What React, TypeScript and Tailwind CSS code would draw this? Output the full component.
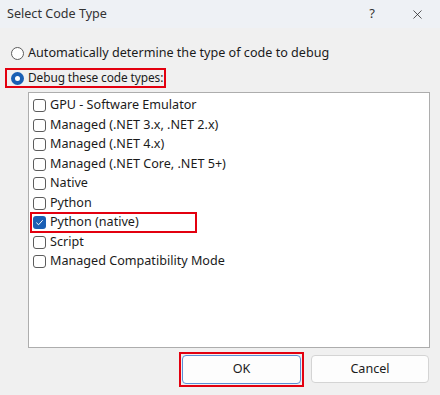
import { X } from 'lucide-react';

const items = [
  { label: 'GPU - Software Emulator', checked: false },
  { label: 'Managed (.NET 3.x, .NET 2.x)', checked: false },
  { label: 'Managed (.NET 4.x)', checked: false },
  { label: 'Managed (.NET Core, .NET 5+)', checked: false },
  { label: 'Native', checked: false },
  { label: 'Python', checked: false },
  { label: 'Python (native)', checked: true, marked: true },
  { label: 'Script', checked: false },
  { label: 'Managed Compatibility Mode', checked: false },
];

function Check({ checked }: { checked: boolean }) {
  if (checked) {
    return (
      <span className="w-[13px] h-[13px] rounded-[3px] bg-[#1a5fb4] flex items-center justify-center flex-shrink-0">
        <svg viewBox="0 0 10 10" className="w-[9px] h-[9px]">
          <path d="M1.5 5.2 L4 7.5 L8.5 2.5" fill="none" stroke="white" strokeWidth="1.1" />
        </svg>
      </span>
    );
  }
  return <span className="w-[13px] h-[13px] rounded-[3px] border border-[#5c5c5c] bg-white flex-shrink-0" />;
}

export default function App() {
  return (
    <div
      className="w-[440px] h-[395px] bg-[#f0f0f0] text-[#1b1b1b] text-[12.6px] flex flex-col overflow-hidden whitespace-nowrap"
      style={{ fontFamily: '"Noto Sans", "Open Sans", sans-serif' }}
    >
      <div className="h-[28px] bg-[#eef1f5] flex items-center pl-[7px] flex-shrink-0">
        <span className="text-[#333]">Select Code Type</span>
        <span className="ml-auto mr-[35px] text-[#333] text-[13px]">?</span>
        <X className="w-[15px] h-[15px] mr-[15px] text-[#222]" strokeWidth={1.2} />
      </div>

      <div className="flex flex-col px-[5px] pt-[16px]">
        <label className="flex items-center gap-[4px] pl-[6px] h-[18px]">
          <span className="w-[13px] h-[13px] rounded-full border border-[#5c5c5c] bg-white flex-shrink-0" />
          <span>Automatically determine the type of code to debug</span>
        </label>
        <div className="mt-[6px] w-[161px] h-[20px] border-2 border-[#e3000f] flex items-center gap-[4px] pl-[4px]">
          <span className="w-[13px] h-[13px] rounded-full bg-[#1a5fb4] flex items-center justify-center flex-shrink-0">
            <span className="w-[5px] h-[5px] rounded-full bg-white" />
          </span>
          <span className="text-[11.9px] tracking-[-0.1px]">Debug these code types:</span>
        </div>
      </div>

      <div className="ml-[28px] mr-[10px] mt-[4px] h-[256px] bg-white border border-[#adadad] pt-[3px] pl-[3px] flex flex-col flex-shrink-0">
        {items.map((it) => (
          <div key={it.label} className="h-[19.5px] flex items-center flex-shrink-0">
            <div
              className={`flex items-center gap-[4px] h-[21px] pl-[1px] ${
                it.marked ? 'border-2 border-[#e3000f] w-[167px] -ml-[2px]' : ''
              }`}
            >
              <Check checked={it.checked} />
              <span>{it.label}</span>
            </div>
          </div>
        ))}
      </div>

      <div className="flex justify-end gap-[8px] pr-[11px] mt-[4px]">
        <div className="border-2 border-[#e3000f] p-[1px] -mr-[1px]">
          <button className="w-[119px] h-[29px] bg-[#fdfdfd] border border-[#5b8fd6] rounded-[4px] flex items-center justify-center">
            OK
          </button>
        </div>
        <button className="mt-[3px] w-[118px] h-[28px] bg-[#fdfdfd] border border-[#d4d4d4] rounded-[4px] flex items-center justify-center">
          Cancel
        </button>
      </div>
    </div>
  );
}
